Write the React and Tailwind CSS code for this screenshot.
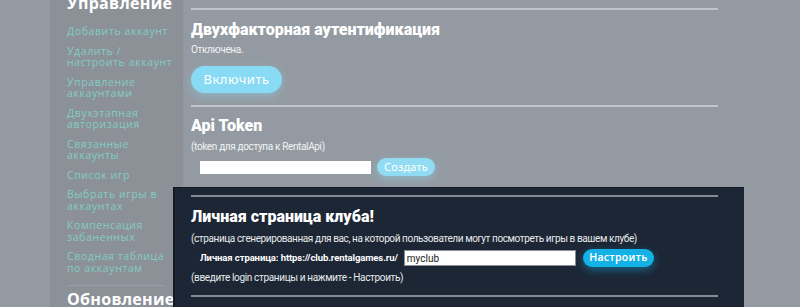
import React from 'react';

const menu = [
  ['Добавить аккаунт'],
  ['Удалить /', 'настроить аккаунт'],
  ['Управление', 'аккаунтами'],
  ['Двухэтапная', 'авторизация'],
  ['Связанные', 'аккаунты'],
  ['Список игр'],
  ['Выбрать игры в', 'аккаунтах'],
  ['Компенсация', 'забаненных'],
  ['Сводная таблица', 'по аккаунтам'],
];

const Line = ({ className = '' }) => (
  <div className={`h-[2px] w-[527px] bg-[#838a93] ${className}`} />
);

const App = () => {
  return (
    <div className="h-[307px] w-[800px] overflow-hidden bg-[#293545] flex font-['Roboto',sans-serif]">
      {/* left gutter */}
      <div className="w-[50px] shrink-0 bg-[#2b3747]" />

      {/* Sidebar */}
      <aside className="w-[133px] shrink-0 bg-[#192331] pl-[17px] font-['Open_Sans',sans-serif]">
        <h3 className="-mt-[7px] text-[16px] leading-[20px] font-bold text-white tracking-[0.3px]">Управление</h3>
        <ul className="mt-[13px] flex flex-col gap-[8px]">
          {menu.map((item, i) => (
            <li key={i} className="text-[10.5px] leading-[11.5px] tracking-[0.6px] text-[#009c8b]">
              {item.map((l, j) => (
                <div key={j}>{l}</div>
              ))}
            </li>
          ))}
        </ul>
        <div className="mt-[11px] h-px w-[98px] bg-[#2e3a48]" />
        <h3 className="mt-[3px] text-[16px] leading-[20px] font-bold text-white tracking-[0.3px]">Обновление</h3>
      </aside>

      {/* Main */}
      <main className="w-[561px] shrink-0 pl-2">
        <Line className="mt-[8px]" />
        <h2 className="mt-[10px] text-[16px] leading-[19px] font-black text-white">Двухфакторная аутентификация</h2>
        <p className="mt-[4px] text-[10px] leading-[14px] tracking-[-0.35px] text-[#e4e6e8]">Отключена.</p>
        <button className="mt-[9px] h-[27px] w-[91px] rounded-full bg-[#12b5e8] font-['Noto_Sans',sans-serif] text-[13px] tracking-[0.5px] text-white shadow-[0_3px_8px_rgba(18,181,232,0.45)]">
          Включить
        </button>
        <Line className="mt-[12px]" />
        <h2 className="mt-[9px] text-[16px] leading-[19px] font-black text-white">Api Token</h2>
        <p className="mt-[5px] text-[10px] leading-[14px] tracking-[-0.35px] text-[#e4e6e8]">(token для доступа к RentalApi)</p>
        <div className="mt-[4px] flex items-center pl-[9px] gap-[6px]">
          <input type="text" className="h-[13px] w-[171px] bg-white outline-none" />
          <button className="h-[18px] w-[58px] rounded-full bg-[#22b8e6] font-['Noto_Sans',sans-serif] text-[11px] tracking-[0.2px] text-white shadow-[0_3px_8px_rgba(18,181,232,0.45)]">
            Создать
          </button>
        </div>

        {/* highlighted section */}
        <section className="relative z-10 -ml-[18px] mt-[11px] w-[571px] bg-[#1c2635] pl-[18px] pt-[7px] pb-[20px] border-l-2 border-t border-[#121a25] shadow-[0_0_0_2000px_rgba(255,255,255,0.5)]">
          <div className="-ml-[2px]">
            <Line />
            <h2 className="mt-[10px] text-[16px] leading-[19px] font-black text-white">Личная страница клуба!</h2>
            <p className="mt-[6px] text-[10px] leading-[14px] tracking-[-0.4px] text-[#e8eaec]">
              (страница сгенерированная для вас, на которой пользователи могут посмотреть игры в вашем клубе)
            </p>
            <div className="mt-[3px] flex items-center pl-[9px]">
              <span className="text-[9.5px] font-bold tracking-[-0.1px] text-white">Личная страница: https://club.rentalgames.ru/</span>
              <input
                type="text"
                defaultValue="myclub"
                className="ml-[6px] h-[16px] w-[172px] border border-[#8a8f96] bg-white px-[2px] text-[10px] leading-[14px] text-[#1a1a1a] outline-none"
              />
              <button className="ml-[7px] h-[18px] w-[71px] rounded-full bg-[#14b1e6] font-['Noto_Sans',sans-serif] text-[10.5px] font-semibold tracking-[0.3px] text-white shadow-[0_3px_8px_rgba(20,177,230,0.45)]">
                Настроить
              </button>
            </div>
            <p className="mt-[4px] text-[10px] leading-[14px] tracking-[-0.35px] text-[#e8eaec]">(введите login страницы и нажмите - Настроить)</p>
            <Line className="mt-[10px] bg-[#7b8088]" />
          </div>
        </section>
      </main>
    </div>
  );
};

export default App;
